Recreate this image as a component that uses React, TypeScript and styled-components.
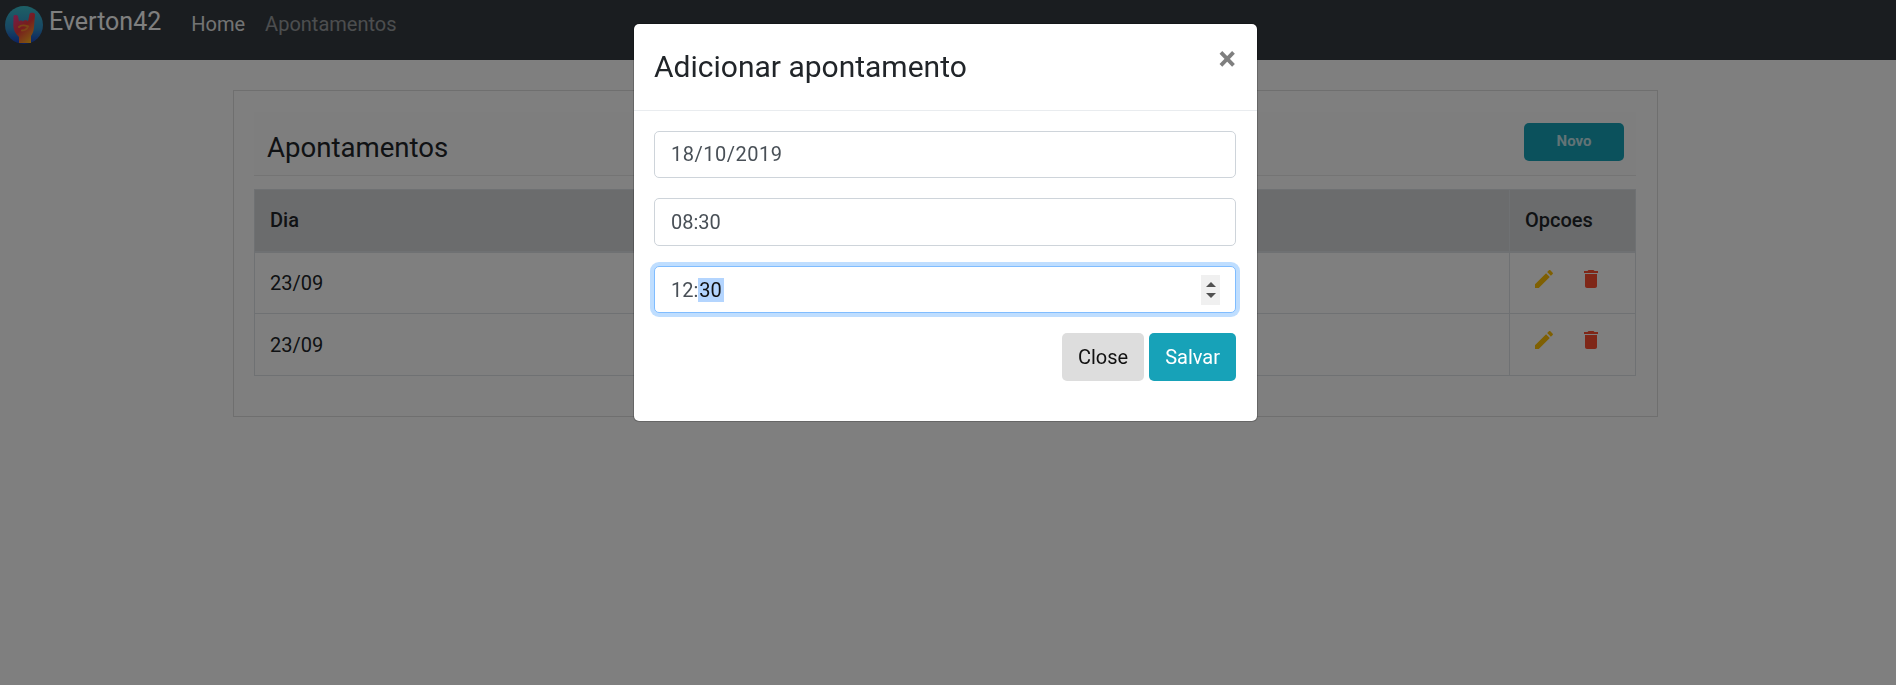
import React from "react";
import styled, { createGlobalStyle } from "styled-components";

const Global = createGlobalStyle`
  html, body { margin: 0; padding: 0; height: 100%; background: #fff; }
  body { font-family: Roboto, "Liberation Sans", sans-serif; font-size: 20px; line-height: 1.5; color: #212529; overflow: hidden; }
  * { box-sizing: border-box; }
`;

const Navbar = styled.nav`
  height: 60px; background: #343a40; display: flex; align-items: flex-start; padding: 6px 0 0 5px;
`;
const Brand = styled.a`
  display: flex; align-items: flex-start; gap: 6px; font-size: 25px; line-height: 32px; color: #fff; margin-right: 30px;
`;
const NavLink = styled.a<{ $active?: boolean }>`
  font-size: 20px; line-height: 30px; margin: 3px 20px 0 0; color: ${p => (p.$active ? "rgba(255,255,255,.9)" : "rgba(255,255,255,.5)")};
`;
const Main = styled.main`
  padding: 30px 238px 0 233px;
`;
const Card = styled.section`
  border: 1px solid rgba(0,0,0,.125); padding: 21px 21px 20px 20px; height: 327px;
`;
const CardHeader = styled.header`
  height: 64px; padding: 11px 12px 0 13px; display: flex; justify-content: space-between; align-items: flex-start;
  background: rgba(0,0,0,.01); border-bottom: 1px solid rgba(0,0,0,.08);
`;
const CardTitle = styled.h4`
  margin: 0; font-size: 27.6px; font-weight: 400; line-height: 50px; color: #212529;
`;
const NewButton = styled.button`
  width: 100px; height: 38px; border: 0; border-radius: 5px; background: #17a2b8; color: rgba(255,255,255,.75);
  font: 700 15px/32px Roboto, sans-serif; padding: 0 0 2px;
`;
const Table = styled.table`
  width: 100%; margin-top: 13px; border-collapse: collapse; table-layout: fixed;
`;
const Th = styled.th<{ $width?: string }>`
  height: 62px; padding: 0 15px; background: #d7d8da; border: 1px solid #dee2e6; border-bottom-width: 2px;
  font-weight: 500; text-align: left; width: ${p => p.$width || "auto"}; color: #212529;
`;
const Td = styled.td`
  height: 62px; padding: 0 15px; border: 1px solid #dee2e6; color: #212529;
`;
const ActionCell = styled(Td)`
  padding: 0;
  vertical-align: top;
`;
const Actions = styled.div`
  display: flex; gap: 23px; padding: 14px 0 0 22px;
`;
const Icon = styled.svg<{ $color: string }>`
  width: 24px; height: 24px; fill: ${p => p.$color}; display: block;
`;

const Overlay = styled.div`
  position: fixed; inset: 0; background: rgba(0,0,0,.5);
`;
const ModalLayer = styled.div`
  position: fixed; inset: 0; display: flex; justify-content: center; align-items: flex-start; padding: 23px 5px 0 0;
`;
const Modal = styled.div`
  width: 625px; height: 399px; background: #fff; border: 1px solid rgba(0,0,0,.2); border-radius: 6px; background-clip: padding-box;
`;
const ModalHeader = styled.header`
  height: 87px; padding: 20px 21px 0 20px; display: flex; justify-content: space-between; align-items: flex-start; border-bottom: 1px solid #e9ecef;
`;
const ModalTitle = styled.h5`
  margin: 0; font-size: 30px; font-weight: 400; line-height: 45px; color: #212529;
`;
const CloseX = styled.span`
  font-size: 33px; font-weight: 700; line-height: 30px; color: #7f7f7f;
`;
const ModalBody = styled.div`
  padding: 20px 21px 0 20px; display: flex; flex-direction: column; gap: 20px;
`;
const Field = styled.input<{ $date?: boolean }>`
  height: 47.3px; padding: 0 16px ${p => (p.$date ? "2px" : "0")}; width: 100%; border: 1px solid #ced4da; border-radius: 5px; background: #fff;
  font: 400 20px Roboto, sans-serif; letter-spacing: ${p => (p.$date ? ".5px" : "0")}; color: #495057; outline: none;
`;
const FocusField = styled.div`
  height: 47.3px; padding: 1px 15px 0 16px; display: flex; align-items: center; justify-content: space-between;
  border: 1px solid #80bdff; border-radius: 5px; background: #fff; box-shadow: 0 0 0 4px rgba(0,123,255,.25);
  font-size: 20px; color: #495057;
`;
const Selected = styled.span`
  background: #b4d5fe; color: #111; line-height: 27px; padding: 0 2px 0 1px;
`;
const Spinner = styled.span`
  width: 19px; height: 30px; background: #f0f0f0; display: flex; flex-direction: column; align-items: center; justify-content: center; gap: 6px;
`;
const Arrow = styled.i<{ $down?: boolean }>`
  width: 0; height: 0; border-left: 5px solid transparent; border-right: 5px solid transparent;
  ${p => (p.$down ? "border-top: 5px solid #505050;" : "border-bottom: 5px solid #505050;")}
`;
const Footer = styled.div`
  display: flex; justify-content: flex-end; gap: 5px;
`;
const FooterButton = styled.button<{ $primary?: boolean }>`
  height: 48px; padding: 0 16px; border: 0; border-radius: 5px; font: 400 20px Roboto, sans-serif;
  background: ${p => (p.$primary ? "#17a2b8" : "#dddddd")}; color: ${p => (p.$primary ? "#fff" : "#111")};
`;

const Logo = () => (
  <svg width="38" height="38" viewBox="0 0 38 38">
    <defs>
      <linearGradient id="disc" x1="0" y1="0" x2="0" y2="1">
        <stop offset="0" stopColor="#3cc0cc" />
        <stop offset=".6" stopColor="#2f8fc8" />
        <stop offset="1" stopColor="#1a3fc0" />
      </linearGradient>
      <linearGradient id="hand" x1=".1" y1="0" x2=".75" y2="1">
        <stop offset="0" stopColor="#e83c98" />
        <stop offset=".5" stopColor="#ee3a3c" />
        <stop offset="1" stopColor="#ffb41e" />
      </linearGradient>
    </defs>
    <circle cx="19" cy="19" r="19" fill="url(#disc)" />
    <path
      d="M8.5 10C8.5 8.5 12.5 8.5 13 10L14 15.5C14.5 14 17.5 14 18 15.5C18.5 13.8 22.5 13.8 23 15.5L24.5 8C25 6.2 30 6.2 30 8.5L29 21C28.8 25 27.5 28 26 30V37H14V31C10.5 28 8.5 24 8.3 20Z"
      fill="url(#hand)"
    />
    <path d="M14 21C16 19 20 19 23 20.5C22 23 19.5 24.5 17 24.5" fill="none" stroke="#f78a2c" strokeWidth="2" strokeLinecap="round" />
  </svg>
);

const Pencil = () => (
  <Icon $color="#ffc107" viewBox="0 0 24 24">
    <path d="M3 17.25V21h3.75L17.81 9.94l-3.75-3.75L3 17.25zM20.71 7.04c.39-.39.39-1.02 0-1.41l-2.34-2.34c-.39-.39-1.02-.39-1.41 0l-1.83 1.83 3.75 3.75 1.83-1.83z" />
  </Icon>
);
const Trash = () => (
  <Icon $color="#ff4e30" viewBox="0 0 24 24">
    <path d="M6 19c0 1.1.9 2 2 2h8c1.1 0 2-.9 2-2V7H6v12zM19 4h-3.5l-1-1h-5l-1 1H5v2h14V4z" />
  </Icon>
);

const rows = ["23/09", "23/09"];

export default function App() {
  return (
    <>
      <Global />
      <Navbar>
        <Brand><Logo />Everton42</Brand>
        <NavLink $active>Home</NavLink>
        <NavLink>Apontamentos</NavLink>
      </Navbar>
      <Main>
        <Card>
          <CardHeader>
            <CardTitle>Apontamentos</CardTitle>
            <NewButton>Novo</NewButton>
          </CardHeader>
          <Table>
            <thead>
              <tr><Th>Dia</Th><Th $width="126px">Opcoes</Th></tr>
            </thead>
            <tbody>
              {rows.map((d, i) => (
                <tr key={i}>
                  <Td>{d}</Td>
                  <ActionCell><Actions><Pencil /><Trash /></Actions></ActionCell>
                </tr>
              ))}
            </tbody>
          </Table>
        </Card>
      </Main>
      <Overlay />
      <ModalLayer>
        <Modal>
          <ModalHeader>
            <ModalTitle>Adicionar apontamento</ModalTitle>
            <CloseX>×</CloseX>
          </ModalHeader>
          <ModalBody>
            <Field $date defaultValue="18/10/2019" />
            <Field defaultValue="08:30" />
            <FocusField>
              <span>12:<Selected>30</Selected></span>
              <Spinner><Arrow /><Arrow $down /></Spinner>
            </FocusField>
            <Footer>
              <FooterButton>Close</FooterButton>
              <FooterButton $primary>Salvar</FooterButton>
            </Footer>
          </ModalBody>
        </Modal>
      </ModalLayer>
    </>
  );
}
